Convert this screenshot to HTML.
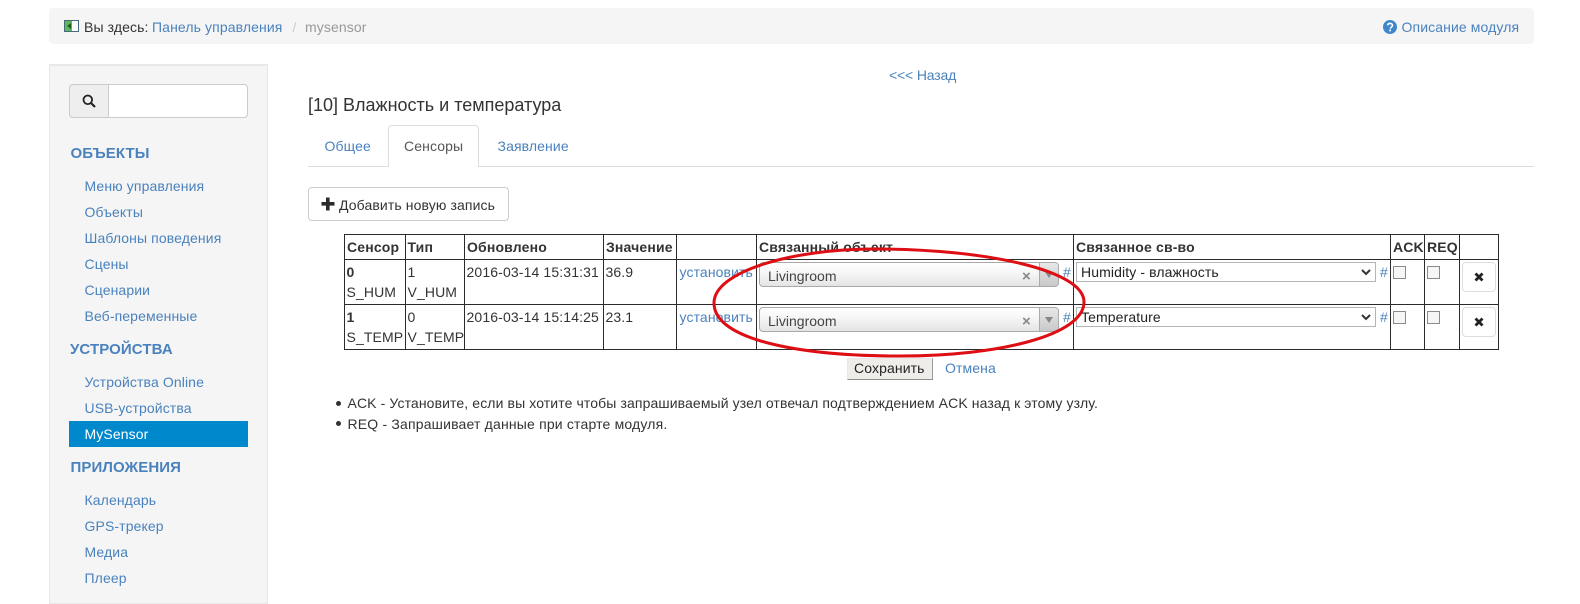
<!DOCTYPE html>
<html lang="ru">
<head>
<meta charset="utf-8">
<title>MySensor</title>
<style>
html,body{margin:0;padding:0;background:#fff;}
body{width:1580px;height:599px;overflow:hidden;position:relative;font-family:"Liberation Sans","DejaVu Sans",sans-serif;font-size:14px;color:#333;}
.t{position:absolute;line-height:20px;height:20px;white-space:nowrap;letter-spacing:.11px;}
.l{color:#4a82bd;}
.g{color:#999;}
.b{font-weight:bold;letter-spacing:.16px;}
.st{font-size:15px;letter-spacing:.1px;}
.box{position:absolute;box-sizing:border-box;}
.h{position:absolute;background:#2b2b2b;}
.s2{position:absolute;box-sizing:border-box;left:759px;width:300px;height:25px;border:1px solid #aaa;border-radius:4px;background:linear-gradient(#fff 0,#f4f4f4 50%,#e4e4e4 100%);}
.s2 i{position:absolute;right:0;top:0;bottom:0;width:18px;border-left:1px solid #aaa;background:linear-gradient(#e8e8e8,#c8c8c8);border-radius:0 3px 3px 0;}
.sel{position:absolute;box-sizing:border-box;left:1076px;width:300px;height:20px;border:1px solid #b5b5b5;background:#fff;}
.cb{position:absolute;box-sizing:border-box;width:13px;height:13px;border:1px solid #8a8a8a;background:#f6f6f6;}
.xb{position:absolute;box-sizing:border-box;left:1462px;width:34px;height:30px;border:1px solid #ddd;border-radius:4px;background:#fff;}
</style>
</head>
<body>
<!-- breadcrumb -->
<div class="box" style="left:49px;top:8px;width:1485px;height:36px;background:#f5f5f5;border-radius:4px;"></div>
<svg style="position:absolute;left:64px;top:20px" width="16" height="13" viewBox="0 0 16 13"><rect x=".5" y=".5" width="14" height="11" fill="#fff" stroke="#4a6a80"/><rect x="1" y="1" width="7" height="10" fill="#5cb85c"/><path d="M7 3 3 6l4 3z" fill="#1d5f1d"/></svg>
<span class="t" style="left:84px;top:16.500px">Вы здесь:</span>
<span class="t l" style="left:152px;top:16.500px">Панель управления</span>
<span class="t" style="left:292.500px;top:16.500px;color:#ccc">/</span>
<span class="t g" style="left:305px;top:16.500px">mysensor</span>
<svg style="position:absolute;left:1383px;top:19.500px" width="14" height="14" viewBox="0 0 14 14"><circle cx="7" cy="7" r="7" fill="#3f87c9"/><path d="M4.600 5.400C4.800 4 5.800 3.400 7 3.400c1.400 0 2.500.8 2.500 2 0 1.800-2 1.700-2 3.200" fill="none" stroke="#fff" stroke-width="1.600"/><rect x="6.200" y="9.600" width="1.800" height="1.700" fill="#fff"/></svg>
<span class="t l" style="left:1401.500px;top:16.500px">Описание модуля</span>

<!-- sidebar -->
<div class="box" style="left:49px;top:64px;width:219px;height:540px;background:#f5f5f5;border:1px solid #e8e8e8;border-top:2px solid #e8e8e8;"></div>
<div class="box" style="left:69px;top:84px;width:179px;height:34px;background:#fff;border:1px solid #ccc;border-radius:4px;"></div>
<div class="box" style="left:69px;top:84px;width:40px;height:34px;background:#eee;border:1px solid #ccc;border-radius:4px 0 0 4px;"></div>
<svg style="position:absolute;left:82px;top:94px" width="14" height="14" viewBox="0 0 14 14"><circle cx="5.800" cy="5.800" r="4.300" fill="none" stroke="#222" stroke-width="1.800"/><path d="M9 9l4 4" stroke="#222" stroke-width="2.200"/></svg>

<span class="t b l st" style="left:70.500px;top:143.500px">ОБЪЕКТЫ</span>
<span class="t l" style="left:84.500px;top:176px">Меню управления</span>
<span class="t l" style="left:84.500px;top:202px">Объекты</span>
<span class="t l" style="left:84.500px;top:228px">Шаблоны поведения</span>
<span class="t l" style="left:84.500px;top:254px">Сцены</span>
<span class="t l" style="left:84.500px;top:280px">Сценарии</span>
<span class="t l" style="left:84.500px;top:306px">Веб-переменные</span>
<span class="t b l st" style="left:70px;top:339.500px">УСТРОЙСТВА</span>
<span class="t l" style="left:84.500px;top:372px">Устройства Online</span>
<span class="t l" style="left:84.500px;top:398px">USB-устройства</span>
<div class="box" style="left:69px;top:421px;width:179px;height:26px;background:#0088cc;"></div>
<span class="t" style="left:84.500px;top:424px;color:#fff">MySensor</span>
<span class="t b l st" style="left:70.500px;top:457.500px">ПРИЛОЖЕНИЯ</span>
<span class="t l" style="left:84.500px;top:490px">Календарь</span>
<span class="t l" style="left:84.500px;top:516px">GPS-трекер</span>
<span class="t l" style="left:84.500px;top:542px">Медиа</span>
<span class="t l" style="left:84.500px;top:568px">Плеер</span>

<!-- main -->
<span class="t l" style="left:889px;top:65px;letter-spacing:-.15px">&lt;&lt;&lt; Назад</span>
<span class="t" style="left:308px;top:95px;font-size:18px;letter-spacing:0">[10] Влажность и температура</span>
<div class="box" style="left:308px;top:166px;width:1226px;height:1px;background:#ddd;"></div>
<div class="box" style="left:388px;top:125px;width:91px;height:42px;background:#fff;border:1px solid #ddd;border-bottom:0;border-radius:4px 4px 0 0;"></div>
<span class="t l" style="left:324.500px;top:136px">Общее</span>
<span class="t" style="left:404px;top:136px;color:#555">Сенсоры</span>
<span class="t l" style="left:497.500px;top:136px">Заявление</span>
<div class="box" style="left:308px;top:187px;width:201px;height:34px;background:#fff;border:1px solid #ccc;border-radius:4px;"></div>
<svg style="position:absolute;left:321px;top:197px" width="14" height="14" viewBox="0 0 14 14"><path d="M5 .5h3.600V5h4.900v3.600H8.600v4.900H5V8.600H.5V5H5z" fill="#2b2b2b"/></svg>
<span class="t" style="left:339px;top:194.500px">Добавить новую запись</span>

<!-- table lines -->
<div class="h" style="left:344px;top:234px;width:1155px;height:1px"></div>
<div class="h" style="left:344px;top:259px;width:1155px;height:1px"></div>
<div class="h" style="left:344px;top:304px;width:1155px;height:1px"></div>
<div class="h" style="left:344px;top:349px;width:1155px;height:1px"></div>
<div class="h" style="left:344px;top:234px;width:1px;height:116px"></div>
<div class="h" style="left:404.500px;top:234px;width:1px;height:116px"></div>
<div class="h" style="left:464px;top:234px;width:1px;height:116px"></div>
<div class="h" style="left:603px;top:234px;width:1px;height:116px"></div>
<div class="h" style="left:676px;top:234px;width:1px;height:116px"></div>
<div class="h" style="left:756px;top:234px;width:1px;height:116px"></div>
<div class="h" style="left:1073px;top:234px;width:1px;height:116px"></div>
<div class="h" style="left:1390px;top:234px;width:1px;height:116px"></div>
<div class="h" style="left:1424px;top:234px;width:1px;height:116px"></div>
<div class="h" style="left:1459px;top:234px;width:1px;height:116px"></div>
<div class="h" style="left:1498px;top:234px;width:1px;height:116px"></div>

<!-- header -->
<span class="t b" style="left:347px;top:237px">Сенсор</span>
<span class="t b" style="left:407.500px;top:237px">Тип</span>
<span class="t b" style="left:467px;top:237px">Обновлено</span>
<span class="t b" style="left:606px;top:237px">Значение</span>
<span class="t b" style="left:759px;top:237px">Связанный объект</span>
<span class="t b" style="left:1076px;top:237px">Связанное св-во</span>
<span class="t b" style="left:1393px;top:237px">ACK</span>
<span class="t b" style="left:1427px;top:237px">REQ</span>

<!-- row 1 -->
<span class="t b" style="left:346.500px;top:262px">0</span>
<span class="t" style="left:346.500px;top:281.500px">S_HUM</span>
<span class="t" style="left:407.500px;top:262px">1</span>
<span class="t" style="left:407.500px;top:281.500px">V_HUM</span>
<span class="t" style="left:466.500px;top:262px;letter-spacing:.13px">2016-03-14 15:31:31</span>
<span class="t" style="left:605.500px;top:262px">36.9</span>
<span class="t l" style="left:679.500px;top:262px">установить</span>
<div class="s2" style="top:262px"><i></i></div>
<span class="t" style="left:768px;top:266px;color:#444;letter-spacing:0">Livingroom</span>
<span class="t b" style="left:1022px;top:267px;color:#888;font-size:15px">×</span>
<svg style="position:absolute;left:1045px;top:272px" width="9" height="6"><path d="M0 0h8L4 6z" fill="#888"/></svg>
<span class="t l" style="left:1063px;top:262px">#</span>
<div class="sel" style="top:262px"></div>
<span class="t" style="left:1081px;top:262px;color:#222">Humidity - влажность</span>
<svg style="position:absolute;left:1361px;top:269px" width="10" height="7"><path d="M1 1l4 4 4-4" fill="none" stroke="#333" stroke-width="2"/></svg>
<span class="t l" style="left:1380px;top:262px">#</span>
<div class="cb" style="left:1393px;top:266px"></div>
<div class="cb" style="left:1427px;top:266px"></div>
<div class="xb" style="top:262px"></div>
<svg style="position:absolute;left:1474px;top:272px" width="10" height="10"><path d="M1.500 1.500l7 7M8.500 1.500l-7 7" stroke="#222" stroke-width="2.800"/></svg>

<!-- row 2 -->
<span class="t b" style="left:346.500px;top:307px">1</span>
<span class="t" style="left:346.500px;top:326.500px">S_TEMP</span>
<span class="t" style="left:407.500px;top:307px">0</span>
<span class="t" style="left:407.500px;top:326.500px">V_TEMP</span>
<span class="t" style="left:466.500px;top:307px;letter-spacing:.13px">2016-03-14 15:14:25</span>
<span class="t" style="left:605.500px;top:307px">23.1</span>
<span class="t l" style="left:679.500px;top:307px">установить</span>
<div class="s2" style="top:307px"><i></i></div>
<span class="t" style="left:768px;top:311px;color:#444;letter-spacing:0">Livingroom</span>
<span class="t b" style="left:1022px;top:312px;color:#888;font-size:15px">×</span>
<svg style="position:absolute;left:1045px;top:317px" width="9" height="6"><path d="M0 0h8L4 6z" fill="#888"/></svg>
<span class="t l" style="left:1063px;top:307px">#</span>
<div class="sel" style="top:307px"></div>
<span class="t" style="left:1081px;top:307px;color:#222">Temperature</span>
<svg style="position:absolute;left:1361px;top:314px" width="10" height="7"><path d="M1 1l4 4 4-4" fill="none" stroke="#333" stroke-width="2"/></svg>
<span class="t l" style="left:1380px;top:307px">#</span>
<div class="cb" style="left:1393px;top:311px"></div>
<div class="cb" style="left:1427px;top:311px"></div>
<div class="xb" style="top:307px"></div>
<svg style="position:absolute;left:1474px;top:317px" width="10" height="10"><path d="M1.500 1.500l7 7M8.500 1.500l-7 7" stroke="#222" stroke-width="2.800"/></svg>

<!-- buttons -->
<div class="box" style="left:847px;top:358px;width:86px;height:22px;background:#efedea;border:1px solid;border-color:#e8e8e8 #9a9a9a #8f8f8f #e8e8e8;"></div>
<span class="t" style="left:854px;top:357.500px;color:#222">Сохранить</span>
<span class="t l" style="left:945px;top:357.500px">Отмена</span>

<!-- notes -->
<div class="box" style="left:335.500px;top:401px;width:5px;height:5px;border-radius:50%;background:#333"></div>
<span class="t" style="left:347.500px;top:393px">ACK - Установите, если вы хотите чтобы запрашиваемый узел отвечал подтверждением ACK назад к этому узлу.</span>
<div class="box" style="left:335.500px;top:421px;width:5px;height:5px;border-radius:50%;background:#333"></div>
<span class="t" style="left:347.500px;top:413.500px;letter-spacing:.18px">REQ - Запрашивает данные при старте модуля.</span>

<!-- red ellipse -->
<svg style="position:absolute;left:0;top:0;pointer-events:none" width="1580" height="599" viewBox="0 0 1580 599"><path d="M714 303C714 272 790 249 875 249C985 249 1084 270 1084 302C1084 335 1000 356 900 356C800 356 714 340 714 303Z" fill="none" stroke="#dd0f14" stroke-width="3"/></svg>
</body>
</html>
